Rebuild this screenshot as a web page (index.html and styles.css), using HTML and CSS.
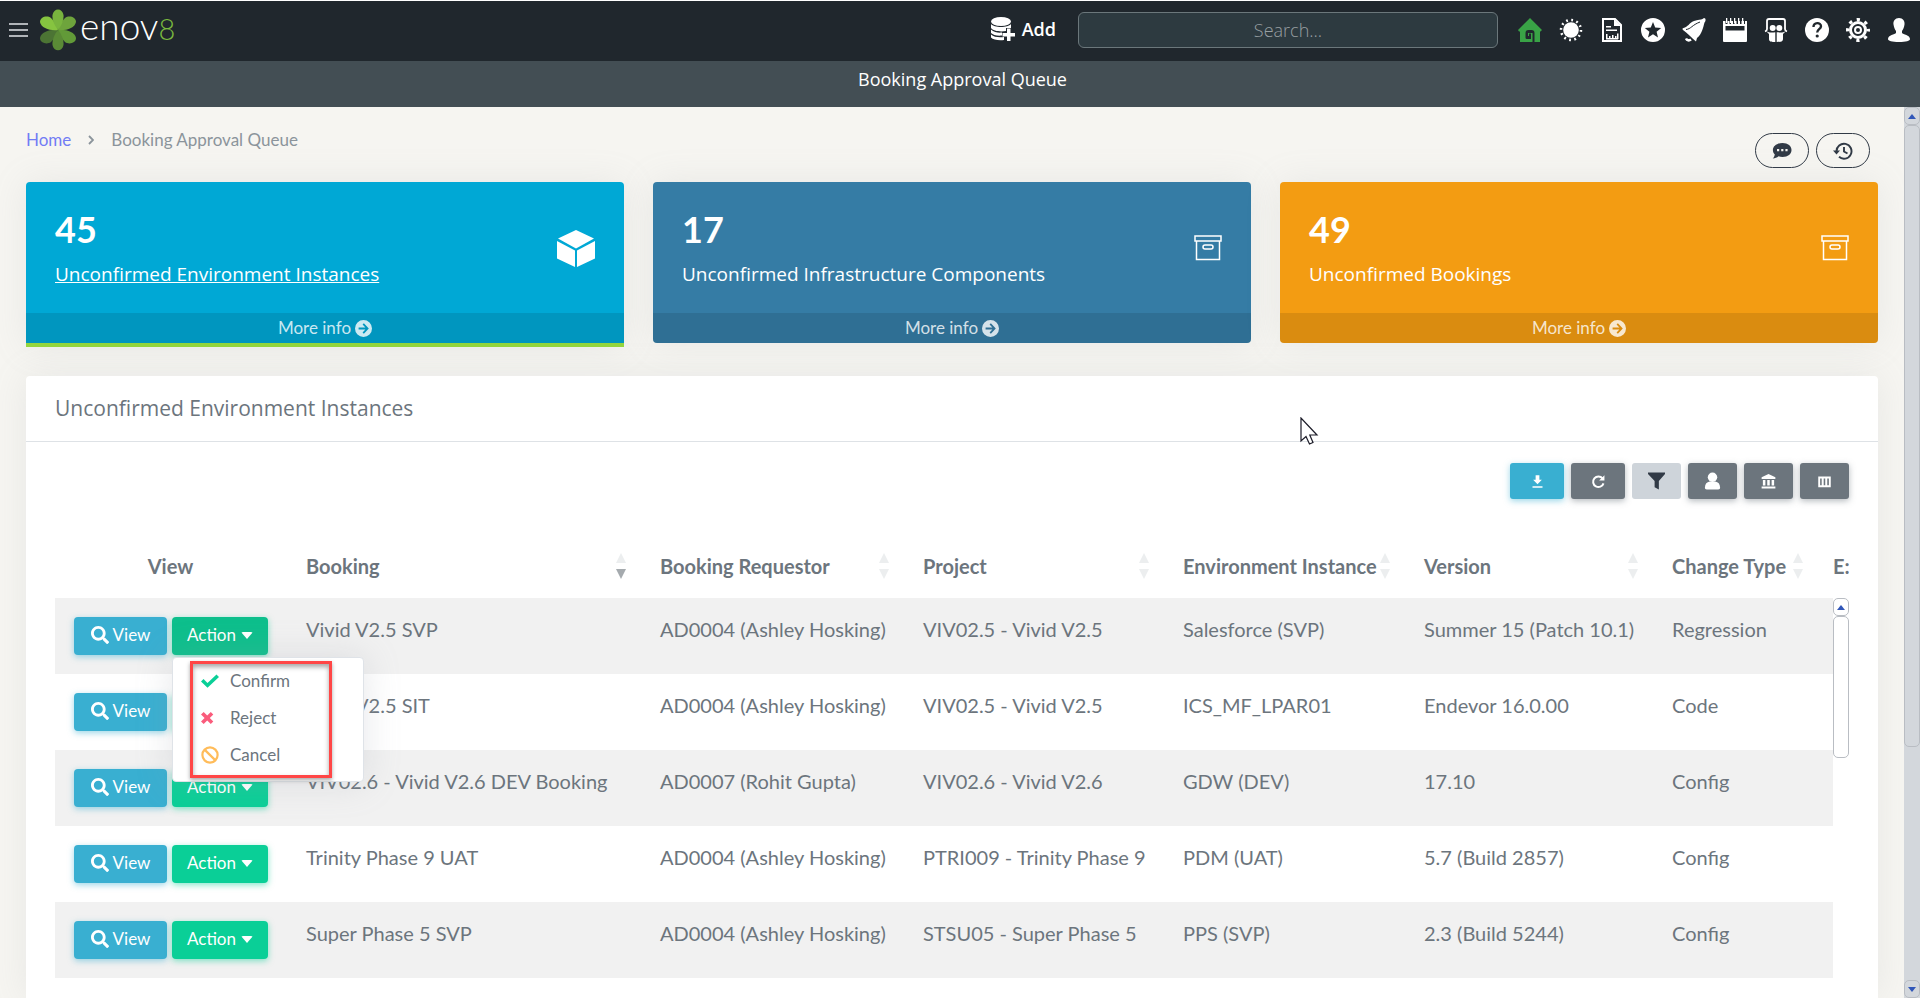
FILE: index.html
```html
<!DOCTYPE html>
<html lang="en">
<head>
<meta charset="utf-8">
<title>Booking Approval Queue</title>
<link rel="stylesheet" href="styles.css">
</head>
<body>
<svg class="defs" aria-hidden="true">
  <symbol id="i-search" viewBox="0 0 512 512"><path d="M505 442.700 405.300 343c-4.500-4.500-10.600-7-17-7H372c27.600-35.300 44-79.700 44-128C416 93.100 322.900 0 208 0S0 93.100 0 208s93.100 208 208 208c48.300 0 92.700-16.400 128-44v16.300c0 6.400 2.500 12.500 7 17l99.700 99.700c9.400 9.400 24.600 9.400 33.900 0l28.300-28.300c9.400-9.400 9.400-24.600.1-34zM208 336c-70.700 0-128-57.200-128-128 0-70.700 57.200-128 128-128 70.700 0 128 57.200 128 128 0 70.700-57.200 128-128 128z"/></symbol>
  <symbol id="i-arrow" viewBox="0 0 18 18"><path fill-rule="evenodd" d="M9 0a9 9 0 1 1 0 18A9 9 0 0 1 9 0zM8 4.800 11 8H3.800v2H11l-3 3.200 1.400 1.300L14.600 9 9.400 3.500z"/></symbol>
  <symbol id="i-archive" viewBox="0 0 28 26"><g fill="none" stroke="currentColor" stroke-width="1.500"><path d="M1 1h26v5H1zM2.500 6v18.500h23V6"/><rect x="9" y="10" width="10" height="4" rx="2"/></g></symbol>
</svg>

<header class="topbar">
  <button class="burger" aria-label="Menu"><span></span><span></span><span></span></button>
  <a class="brand" href="#">
    <svg class="flower" viewBox="0 0 36 42" aria-hidden="true">
      <path fill="#4c7434" d="M18 21C10 20 1 23 0 29c0 5 7 7 11 4 4-4 6-8 7-12z"/>
      <path fill="#629a38" d="M18 21c8-1 17 2 18 8 0 5-7 7-11 4-4-4-6-8-7-12z"/>
      <path fill="#5a8a36" d="M18 21c-4 5-6 10-5.500 15 1 7 10 7 11 0C24 31 22 26 18 21z"/>
      <path fill="#6ea43c" d="M18 21c8 1 17-2 18-8 0-5-7-7-11-4-4 4-6 8-7 12z"/>
      <path fill="#86c440" d="M18 21C10 22 1 19 0 13c0-5 7-7 11-4 4 4 6 8 7 12z"/>
      <path fill="#78b43e" d="M18 21c-4-5-6-10-5.500-15 1-7.500 10-7.500 11 0C24 11 22 16 18 21z"/>
    </svg>
    <span class="word">enov<span class="eight">8</span></span>
  </a>
  <button class="add">
    <svg viewBox="0 0 24 24" aria-hidden="true"><ellipse cx="10" cy="4.500" rx="10" ry="4.500"/><path d="M0 7c3 4 17 4 20 0v4h-5v3C9 15 2 14 0 11zM0 12.500c3 3 8 3.500 11 3v3C6 19 2 18 0 16zM0 17.500c3 3 9 3 13 2.500V23C8 23.500 2 23 0 20.500z"/><path d="M16 11.500h3.500v4.500H24v3.500h-4.500V24H16v-4.500h-4.500V16H16z"/></svg>
    Add
  </button>
  <input class="search" type="text" placeholder="Search..." aria-label="Search">
  <nav class="icons" aria-label="Shortcuts">
    <a href="#" aria-label="Home" class="home"><svg viewBox="0 0 24 24"><path fill-rule="evenodd" d="M12 0 24 12l-1.500 1.500H22V24h-5.500V15c0-2-1-3-3-3h-3C8.500 12 7.500 13 7.500 15v4.500c0 1 .8 1.500 1.800 1.500H13v-5.500h-2V18h-1v-3h4.500v9H2V13.500H1L0 12z"/></svg></a>
    <a href="#" aria-label="Theme"><svg viewBox="0 0 24 24"><circle cx="12" cy="12" r="7.800"/><circle cx="12" cy="12" r="10" fill="none" stroke="currentColor" stroke-width="2.500" stroke-dasharray="1.800 3.430"/></svg></a>
    <a href="#" aria-label="Reports"><svg viewBox="0 0 24 24"><path fill="none" stroke="currentColor" stroke-width="2" d="M3 1h12l6 6v16H3z"/><path d="M14 1v7h7zM6 8h5v1.500H6zM6 11.500h11V13H6zM6 16h1.500v5H6zM9 18h1.500v3H9zM12 17h1.500v4H12zM15 18h1.500v3H15zM6 20h12v1.500H6zM17 15.500h1.500V21H17z"/></svg></a>
    <a href="#" aria-label="Favourites"><svg viewBox="0 0 24 24"><path fill-rule="evenodd" d="M12 0a12 12 0 1 1 0 24 12 12 0 0 1 0-24zm0 4-2.200 5.500-6 .5 4.600 3.800L7 19.500l5-3.200 5 3.200-1.400-5.700L20.200 10l-6-.5z"/></svg></a>
    <a href="#" aria-label="Notifications"><svg viewBox="0 0 24 24"><path d="M22 0c2 0 2 3 .5 4.500C21 10 20 16 15 20l-1 3.500C10 20 5 15 1 12c-1-1-.5-2 .5-2C6 9 7 5 12 3c4-1.500 7-1 8.500-2z"/><path d="M4 20.500c1 2 3 2.500 5 1"  fill="none" stroke="currentColor" stroke-width="2.500"/><path fill="none" stroke="#20272d" stroke-width="1" d="M4 11.500C9 11 10 7 18 4"/></svg></a>
    <a href="#" aria-label="Calendar"><svg viewBox="0 0 24 24"><path fill-rule="evenodd" d="M0 3h2.500v3h2V3h2v3h1.500V3h2v3h1.500V3h2v3H15V3h2v3h1.500V3H21v3h1V3h2v20a1 1 0 0 1-1 1H1a1 1 0 0 1-1-1zM2.500 8v4.500h19V8z"/><path d="M3 0h1.300v5H3zM7 0h1.300v5H7zM11 0h1.300v5H11zM15 0h1.300v5H15zM19 0h1.300v5H19z"/></svg></a>
    <a href="#" aria-label="Presentations"><svg viewBox="0 0 24 24"><path fill="none" stroke="currentColor" stroke-width="1.800" d="M1 13.500C2.500 13 3 12 3 11V3c0-1.500.5-2 2-2h14c1.500 0 2 .5 2 2v8c0 1 .5 2 2 2.500"/><circle cx="8.700" cy="10" r="3"/><circle cx="15.300" cy="10" r="3"/><path d="M2 13c3 2 6 1.500 9.300 1.300V24C8 24 5 24 5 21v-5zM22 13c-3 2-6 1.500-9.300 1.300V24c3.300 0 6.300 0 6.300-3v-5z"/></svg></a>
    <a href="#" aria-label="Help"><svg viewBox="0 0 24 24"><circle cx="12" cy="12" r="12"/><path fill="none" stroke="#20272d" stroke-width="2.400" d="M8.500 9c0-5 7.500-5 7.500-.8 0 3-3.800 3-3.800 6.300"/><circle cx="12.200" cy="18" r="1.600" fill="#20272d"/></svg></a>
    <a href="#" aria-label="Settings"><svg viewBox="0 0 24 24"><circle cx="12" cy="12" r="7.500" fill="none" stroke="currentColor" stroke-width="3"/><circle cx="12" cy="12" r="10.500" fill="none" stroke="currentColor" stroke-width="3" stroke-dasharray="3.300 4.947" stroke-dashoffset="1.650"/><circle cx="12" cy="12" r="3" fill="none" stroke="currentColor" stroke-width="2"/></svg></a>
    <a href="#" aria-label="Account"><svg viewBox="0 0 24 24"><path d="M12 0c4 0 6 3 5.500 6.500-.4 3-1.300 5-2.500 6.500v2c1 1.500 8 2 8 6 0 2-4 3-11 3S1 23 1 21c0-4 7-4.500 8-6v-2C7.800 11.500 7 9.500 6.500 6.500 6 3 8 0 12 0z"/></svg></a>
  </nav>
</header>
<div class="titlebar">Booking Approval Queue</div>

<div class="viewport">
  <main class="content">
    <div class="pagehead">
      <nav class="crumbs" aria-label="Breadcrumb">
        <a href="#">Home</a>
        <svg viewBox="0 0 6 10" aria-hidden="true"><path d="M1 1l4 4-4 4" fill="none" stroke="currentColor" stroke-width="1.800"/></svg>
        <span>Booking Approval Queue</span>
      </nav>
      <div class="pills">
        <button aria-label="Comments"><svg viewBox="0 0 20 20"><path fill-rule="evenodd" d="M10.500 2C16 2 19.500 5 19.500 9s-3.500 7-9 7c-1.500 0-2.800-.2-4-.7C5 16.600 3 17.500.800 17.500c1-1 1.800-2.500 2-4C1.500 12.300.9 10.800.9 9 .9 5 5 2 10.500 2zM5 8v2.200h2.200V8zm4.200 0v2.200h2.200V8zm4.200 0v2.200h2.200V8z"/></svg></button>
        <button aria-label="History"><svg viewBox="0 0 20 20"><path fill="none" stroke="currentColor" stroke-width="1.900" d="M3.500 10.500A7.500 7.500 0 1 1 6 15.800M11 6v4.500l3.500 2"/><path d="M0 9.500h7L3.500 13.500z"/></svg></button>
      </div>
    </div>

    <section class="cards">
      <article class="card blue active">
        <div class="cardbody">
          <div><p class="num">45</p><a class="label" href="#">Unconfirmed Environment Instances</a></div>
          <svg class="cube" viewBox="0 0 38 37" aria-hidden="true"><path d="M19 0 37 8.500 19 18.500 1 8.500zM0 11l18 9.500V37L0 28.500zM38 11l-18 9.500V37l18-8.500z"/></svg>
        </div>
        <a class="more" href="#">More info <svg aria-hidden="true"><use href="#i-arrow"/></svg></a>
      </article>
      <article class="card steel">
        <div class="cardbody">
          <div><p class="num">17</p><a class="label" href="#">Unconfirmed Infrastructure Components</a></div>
          <svg class="box" aria-hidden="true"><use href="#i-archive"/></svg>
        </div>
        <a class="more" href="#">More info <svg aria-hidden="true"><use href="#i-arrow"/></svg></a>
      </article>
      <article class="card orange">
        <div class="cardbody">
          <div><p class="num">49</p><a class="label" href="#">Unconfirmed Bookings</a></div>
          <svg class="box" aria-hidden="true"><use href="#i-archive"/></svg>
        </div>
        <a class="more" href="#">More info <svg aria-hidden="true"><use href="#i-arrow"/></svg></a>
      </article>
    </section>

    <section class="panel">
      <h2>Unconfirmed Environment Instances</h2>
      <div class="tools">
        <button class="wide info" aria-label="Download"><svg viewBox="0 0 24 24"><path d="M19 9h-4V2H9v7H5l7 7.500zM4 19.500h16V22H4z"/></svg></button>
        <button class="wide" aria-label="Refresh"><svg viewBox="0 0 24 24"><path fill="none" stroke="currentColor" stroke-width="3.200" d="M18.500 7A8.500 8.500 0 1 0 20 15"/><path d="M21.500 2v8.500H13z"/></svg></button>
        <button class="light" aria-label="Filter"><svg class="big" viewBox="0 0 18 18"><path d="M0 0h18v1.500L11.500 9v9L7 15.500V9L0 1.500z"/></svg></button>
        <button aria-label="My bookings"><svg class="big" viewBox="0 0 18 18"><circle cx="9" cy="5" r="5"/><path d="M1 16c0-4 2-6 5-6.500h6c3 .5 5 2.500 5 6.500 0 1.500-.5 2-2 2H3c-1.500 0-2-.5-2-2z"/></svg></button>
        <button aria-label="Organisation"><svg viewBox="0 0 24 24"><path d="M12 0 23 5v3H1V5zM3 9.500h4v9H3zM10 9.500h4v9h-4zM17 9.500h4v9h-4zM1 20h22v3H1z"/></svg></button>
        <button aria-label="Columns"><svg viewBox="0 0 24 24"><path fill-rule="evenodd" d="M2 4h20v17H2zM5 7v11h2.500V7zM10.700 7v11h2.500V7zM16.400 7v11H19V7z"/></svg></button>
      </div>

      <div class="tablewrap">
        <table>
          <colgroup><col class="c1"><col class="c2"><col class="c3"><col class="c4"><col class="c5"><col class="c6"><col class="c7"><col class="c8"></colgroup>
          <thead>
            <tr>
              <th class="mid">View</th>
              <th><div class="th">Booking<span class="sort desc"></span></div></th>
              <th><div class="th">Booking Requestor<span class="sort"></span></div></th>
              <th><div class="th">Project<span class="sort"></span></div></th>
              <th><div class="th">Environment Instance<span class="sort"></span></div></th>
              <th><div class="th">Version<span class="sort"></span></div></th>
              <th><div class="th">Change Type<span class="sort"></span></div></th>
              <th class="last">E:</th>
            </tr>
          </thead>
          <tbody>
            <tr>
              <td class="acts"><div class="btns"><button class="btn info"><svg aria-hidden="true"><use href="#i-search"/></svg>View</button>
                <div class="drop"><button class="btn ok open">Action<span class="caret"></span></button>
                  <div class="menu">
                    <div class="outline">
                      <a href="#"><svg class="green" viewBox="0 0 18 18"><path d="M0 9.500 2.500 7l4 4L15.500 2.500 18 5 6.500 15.800z"/></svg>Confirm</a>
                      <a href="#"><svg class="red" viewBox="0 0 18 18"><path d="M0 5.500 2.700 3 6.200 6.500 9.800 3l2.500 2.500L8.800 9l3.500 3.500L9.800 15l-3.600-3.500L2.700 15 0 12.500 3.600 9z"/></svg>Reject</a>
                      <a href="#"><svg class="amber" viewBox="0 0 18 18"><g fill="none" stroke="currentColor" stroke-width="2.200"><circle cx="9" cy="9" r="7.600"/><path d="M3.600 3.600l10.800 10.800"/></g></svg>Cancel</a>
                    </div>
                  </div>
                </div></div></td>
              <td>Vivid V2.5 SVP</td><td>AD0004 (Ashley Hosking)</td><td>VIV02.5 - Vivid V2.5</td><td>Salesforce (SVP)</td><td>Summer 15 (Patch 10.1)</td><td>Regression</td><td></td>
            </tr>
            <tr>
              <td class="acts"><div class="btns"><button class="btn info"><svg aria-hidden="true"><use href="#i-search"/></svg>View</button><button class="btn ok">Action<span class="caret"></span></button></div></td>
              <td>Vivid V2.5 SIT</td><td>AD0004 (Ashley Hosking)</td><td>VIV02.5 - Vivid V2.5</td><td>ICS_MF_LPAR01</td><td>Endevor 16.0.00</td><td>Code</td><td></td>
            </tr>
            <tr>
              <td class="acts"><div class="btns"><button class="btn info"><svg aria-hidden="true"><use href="#i-search"/></svg>View</button><button class="btn ok">Action<span class="caret"></span></button></div></td>
              <td>VIV02.6 - Vivid V2.6 DEV Booking</td><td>AD0007 (Rohit Gupta)</td><td>VIV02.6 - Vivid V2.6</td><td>GDW (DEV)</td><td>17.10</td><td>Config</td><td></td>
            </tr>
            <tr>
              <td class="acts"><div class="btns"><button class="btn info"><svg aria-hidden="true"><use href="#i-search"/></svg>View</button><button class="btn ok">Action<span class="caret"></span></button></div></td>
              <td>Trinity Phase 9 UAT</td><td>AD0004 (Ashley Hosking)</td><td>PTRI009 - Trinity Phase 9</td><td>PDM (UAT)</td><td>5.7 (Build 2857)</td><td>Config</td><td></td>
            </tr>
            <tr>
              <td class="acts"><div class="btns"><button class="btn info"><svg aria-hidden="true"><use href="#i-search"/></svg>View</button><button class="btn ok">Action<span class="caret"></span></button></div></td>
              <td>Super Phase 5 SVP</td><td>AD0004 (Ashley Hosking)</td><td>STSU05 - Super Phase 5</td><td>PPS (SVP)</td><td>2.3 (Build 5244)</td><td>Config</td><td></td>
            </tr>
          </tbody>
        </table>
        <div class="innerbar" aria-hidden="true"><span class="sb up"></span><span class="thumb"></span></div>
      </div>
    </section>
  </main>
  <div class="pagebar" aria-hidden="true"><span class="sb up"></span><span class="thumb"></span><span class="sb down"></span></div>
</div>

<svg class="pointer" viewBox="0 0 19 28" aria-hidden="true"><path d="M1 1v23l5-4.500 3.500 7.500 3.500-1.500-3.200-7.500H17z" fill="#fff" stroke="#1c1c28" stroke-width="1.200"/></svg>
</body>
</html>
```

FILE: styles.css
```css
* { box-sizing: border-box; }

body {
  margin: 0;
  height: 100vh;
  display: flex;
  flex-direction: column;
  overflow: hidden;
  border-top: 1px solid #fff;
  background: #f6f5f1;
  color: #6c757d;
  font: 20px/24px Lato, "Open Sans", sans-serif;
}

button, input { font: inherit; }
button { border: 0; padding: 0; cursor: pointer; }
a { color: inherit; text-decoration: none; }
svg { fill: currentColor; flex: none; display: block; }
.defs { position: absolute; width: 0; height: 0; }

/* Top bar */
.topbar {
  flex: none;
  height: 60px;
  display: flex;
  align-items: center;
  padding: 0 9px 2px;
  background: #20272d;
  color: #fff;
}
.burger { width: 19px; display: grid; gap: 4px; background: none; }
.burger span { height: 2px; background: #b0b4b8; }
.brand { display: flex; align-items: center; gap: 4px; margin-left: 12px; }
.flower { width: 36px; height: 42px; }
.word { font-size: 37px; line-height: 42px; font-weight: 300; padding-bottom: 6px; }
.eight { font-size: 29px; color: #7ab93f; }
.add {
  display: flex;
  align-items: center;
  gap: 7px;
  margin-left: auto;
  padding-bottom: 2px;
  background: none;
  color: #fff;
  font: 600 18px/24px "Open Sans", sans-serif;
}
.add svg { width: 24px; height: 24px; }
.search {
  width: 420px;
  height: 36px;
  margin: 0 20px 0 22px;
  border: 1px solid #6b777b;
  border-radius: 6px;
  background: #2d3a40;
  color: #fff;
  text-align: center;
  font: 300 18px/24px "Open Sans", sans-serif;
}
.search::placeholder { color: #989fa2; opacity: 1; }
.icons { display: flex; gap: 17px; }
.icons svg { width: 24px; height: 24px; }
.home { color: #39a346; }

.titlebar {
  flex: none;
  height: 46px;
  padding: 6px 0 0 5px;
  background: #434e54;
  color: #fff;
  text-align: center;
  font: 18px/24px "Open Sans", sans-serif;
}

/* Page */
.viewport { flex: 1; min-height: 0; display: flex; }
.content {
  flex: 1;
  min-width: 0;
  padding: 0 26px;
  display: flex;
  flex-direction: column;
  overflow: hidden;
}
.pagehead { display: flex; justify-content: space-between; height: 75px; flex: none; }
.crumbs { display: flex; align-items: center; gap: 17px; height: 65px; font-size: 17px; color: #8b949b; }
.crumbs a { color: #727cf5; }
.crumbs svg { width: 6px; height: 10px; }
.pills { display: flex; gap: 7px; padding: 26px 8px 0 0; }
.pills button {
  width: 54px;
  height: 35px;
  display: grid;
  place-items: center;
  border: 1px solid #313a46;
  border-radius: 18px;
  background: none;
  color: #313a46;
}
.pills svg { width: 20px; height: 20px; }

.cards {
  flex: none;
  display: grid;
  grid-template-columns: repeat(3, 1fr);
  gap: 29px;
  height: 194px;
  align-items: start;
}
.card { border-radius: 4px; color: #fff; box-shadow: 0 0 35px rgba(154, 161, 171, .15); }
.cardbody { height: 131px; padding: 0 29px; display: flex; justify-content: space-between; }
.num { margin: 26px 0 11px; font-size: 36px; line-height: 42px; font-weight: 700; }
.label { font: 19px/24px "Open Sans", sans-serif; }
.cube { width: 38px; height: 37px; margin-top: 48px; }
.box { width: 28px; height: 26px; margin-top: 53px; }
.more {
  height: 30px;
  display: flex;
  align-items: center;
  justify-content: center;
  gap: 4px;
  background: rgba(0, 0, 0, .1);
  border-radius: 0 0 4px 4px;
  color: rgba(255, 255, 255, .8);
  font-size: 17px;
}
.more svg { width: 17px; height: 17px; }
.blue { background: #00a8d5; }
.steel { background: #357ca5; }
.orange { background: #f39c12; }
.active { border-bottom: 4px solid #94d63e; border-radius: 4px 4px 0 0; }
.active .label { text-decoration: underline; }
.active .more { border-radius: 0; }

.panel {
  flex: 1;
  background: #fff;
  border-radius: 4px 4px 0 0;
  box-shadow: 0 0 35px rgba(154, 161, 171, .15);
  display: flex;
  flex-direction: column;
}
.panel h2 {
  margin: 0;
  padding: 20px 29px 21px;
  border-bottom: 1px solid #dee2e6;
  font: 21px/24px "Open Sans", sans-serif;
}
.tools { display: flex; justify-content: flex-end; gap: 7px; padding: 21px 29px 0; }
.tools button {
  width: 49px;
  height: 36px;
  display: grid;
  place-items: center;
  border-radius: 3px;
  background: #6c757d;
  color: #fff;
  box-shadow: 0 2px 6px rgba(108, 117, 125, .5);
}
.tools .wide { width: 54px; }
.tools .info { background: #39afd1; box-shadow: 0 2px 6px rgba(57, 175, 209, .5); }
.tools .light { background: #ced4da; color: #313a46; box-shadow: none; }
.tools svg { width: 15px; height: 15px; }
.tools .big { width: 17px; height: 18px; }

/* Table */
.tablewrap { position: relative; flex: 1; margin: 33px 29px 0; overflow: hidden; }
table { width: 100%; table-layout: fixed; border-collapse: collapse; }
.c1 { width: 231px; }
.c2 { width: 354px; }
.c3 { width: 263px; }
.c4 { width: 260px; }
.c5 { width: 241px; }
.c6 { width: 248px; }
.c7 { width: 165px; }
.c8 { width: 32px; }
th {
  height: 66px;
  padding: 2px 0 0 20px;
  text-align: left;
  font-weight: 700;
  white-space: nowrap;
}
th.mid { padding-left: 0; text-align: center; }
th.last { padding-left: 16px; }
.th { display: flex; align-items: center; justify-content: space-between; padding-right: 14px; }
.sort { display: grid; gap: 6px; }
.sort::before, .sort::after { content: ""; border: 5px solid transparent; }
.sort::before { border-top: 0; border-bottom: 10px solid #eceeef; }
.sort::after { border-bottom: 0; border-top: 10px solid #eceeef; }
.sort.desc::after { border-top-color: #a5aaae; }
td { height: 76px; padding: 19px 0 0 20px; vertical-align: top; white-space: nowrap; }
tbody tr:nth-child(odd) { background: #f1f1f1; }
.btns { display: flex; gap: 5px; }
.drop { position: relative; }
.btn {
  height: 38px;
  display: flex;
  align-items: center;
  justify-content: center;
  padding-bottom: 2px;
  border-radius: 4px;
  color: #fff;
  font-size: 17px;
}
.btn.info { width: 93px; gap: 4px; background: #39afd1; box-shadow: 0 2px 6px rgba(57, 175, 209, .5); }
.btn.ok { width: 96px; gap: 5px; background: #0acf97; box-shadow: 0 2px 6px rgba(10, 207, 151, .5); }
.btn.open { background: #0dbf8c; }
.btn svg { width: 18px; height: 18px; }
.caret { border: 6px solid transparent; border-bottom: 0; border-top: 7px solid #fff; border-radius: 2px; }
.menu {
  position: absolute;
  z-index: 2;
  top: 40px;
  left: 0;
  width: 192px;
  padding: 3px 31px 3px 17px;
  border: 1px solid #dfe3e8;
  border-radius: 4px;
  background: #fff;
  box-shadow: 0 0 35px rgba(154, 161, 171, .25);
}
.outline {
  border: 3px solid #ff4646;
  padding: 0 8px;
  box-shadow: 0 2px 4px rgba(0, 0, 0, .35), inset 0 3px 5px rgba(0, 0, 0, .35);
}
.outline a { display: flex; align-items: center; gap: 11px; height: 37px; padding-bottom: 3px; font-size: 17px; }
.outline svg { width: 18px; height: 18px; }
.green { color: #0acf97; }
.red { color: #fa5c7c; }
.amber { color: #ffbc5a; }
.acts { padding-left: 19px; }

/* Scroll bars */
.innerbar {
  position: absolute;
  top: 66px;
  right: 0;
  bottom: 0;
  width: 16px;
  background: #fff;
}
.innerbar .thumb { height: 142px; background: #fff; }
.pagebar { flex: none; width: 16px; display: flex; flex-direction: column; background: #d3d7dc; }
.pagebar .thumb { flex: 0 1 622px; }
.pagebar .down { margin-top: auto; }
.sb, .thumb { display: block; border: 1px solid #b9bdc3; border-radius: 5px; }
.sb { height: 18px; display: grid; place-items: center; }
.sb::before { content: ""; border: 4px solid transparent; }
.up::before { border-top: 0; border-bottom: 5px solid #3056b8; }
.down::before { border-bottom: 0; border-top: 5px solid #3056b8; }

.pointer { position: absolute; left: 1300px; top: 417px; width: 19px; height: 28px; }
```
